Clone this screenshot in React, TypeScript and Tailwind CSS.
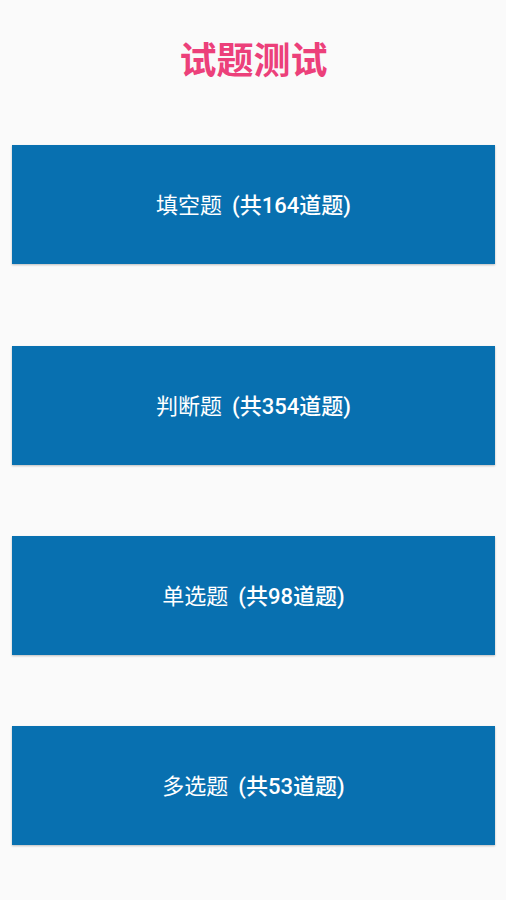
const items = [
  { name: "填空题", count: 164, mt: "mt-[62px]" },
  { name: "判断题", count: 354, mt: "mt-[82px]" },
  { name: "单选题", count: 98, mt: "mt-[71px]" },
  { name: "多选题", count: 53, mt: "mt-[71px]" },
];

export default function App() {
  return (
    <div
      className="min-h-[900px] w-full bg-[#fafafa] flex flex-col pl-3 pr-[11px]"
      style={{ fontFamily: 'Roboto, "Noto Sans CJK SC", sans-serif' }}
    >
      <h1 className="mt-[40px] h-[43px] text-center text-[37px] leading-[43px] font-bold text-[#ec407a]">
        试题测试
      </h1>

      {items.map((it) => (
        <button
          key={it.name}
          className={`${it.mt} h-[119px] w-full bg-[#0870b0] text-white flex items-center justify-center pt-[2px] shadow-[0_1px_2px_rgba(0,0,0,0.25)]`}
        >
          <span className="text-[22px] leading-none font-normal">{it.name}</span>
          <span className="ml-[10px] text-[22px] leading-none font-medium">
            (共{it.count}道题)
          </span>
        </button>
      ))}
    </div>
  );
}
